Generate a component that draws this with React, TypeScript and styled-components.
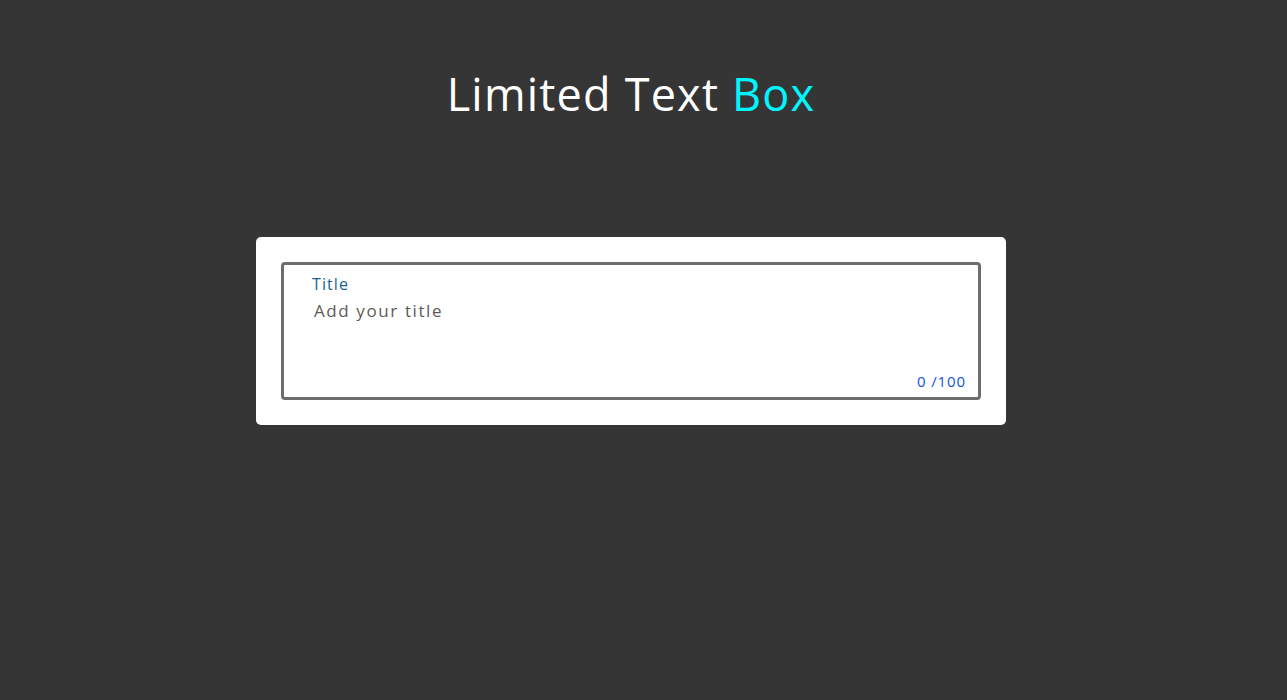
import React, { useState } from "react";
import styled, { createGlobalStyle } from "styled-components";

const Global = createGlobalStyle`
  html, body { margin: 0; padding: 0; background: #353535; }
  body { font-family: "Open Sans", "Noto Sans", sans-serif; }
  * { box-sizing: border-box; }
`;

const Page = styled.div`
  min-height: 700px;
  display: flex;
  flex-direction: column;
  align-items: center;
  padding: 66px 25px 0 0;
`;

const Heading = styled.h1`
  margin: 0;
  font-family: "Open Sans", sans-serif;
  font-weight: 500;
  font-size: 45px;
  line-height: 56px;
  color: #ffffff;
  letter-spacing: 1.2px;
`;

const Accent = styled.span`
  color: #00f6ff;
`;

const Card = styled.div`
  margin-top: 115px;
  width: 750px;
  background: #ffffff;
  border-radius: 5px;
  padding: 25px;
`;

const Field = styled.label`
  display: flex;
  flex-direction: column;
  height: 138px;
  border: 3px solid #6d6d6d;
  border-radius: 4px;
  padding: 9px 12px 6px 28px;
`;

const Label = styled.span`
  font-size: 16px;
  font-weight: 500;
  line-height: 20px;
  color: #1a5f8e;
  letter-spacing: 1.1px;
`;

const Area = styled.textarea`
  flex: 1;
  border: none;
  outline: none;
  resize: none;
  padding: 5px 0 0 2px;
  font-family: "Open Sans", sans-serif;
  font-size: 17px;
  font-weight: 500;
  letter-spacing: 1.6px;
  color: #333;
  background: transparent;
  &::placeholder { color: #5e5a57; }
`;

const Counter = styled.span`
  align-self: flex-end;
  font-size: 15px;
  line-height: 20px;
  color: #0d52e0;
  letter-spacing: 0.9px;
`;

export default function App() {
  const [text, setText] = useState("");
  return (
    <Page>
      <Global />
      <Heading>
        Limited Text <Accent>Box</Accent>
      </Heading>
      <Card>
        <Field>
          <Label>Title</Label>
          <Area
            placeholder="Add your title"
            maxLength={100}
            value={text}
            onChange={(e) => setText(e.target.value)}
          />
          <Counter>{text.length} /100</Counter>
        </Field>
      </Card>
    </Page>
  );
}
